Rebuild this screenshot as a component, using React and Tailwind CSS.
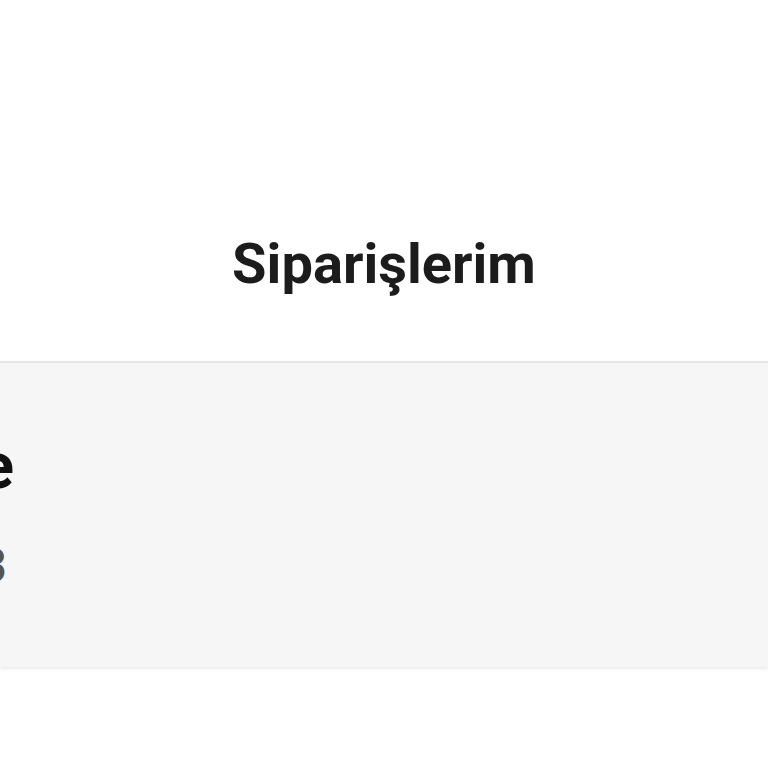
export default function App() {
  return (
    <div className="w-[768px] h-[768px] overflow-hidden bg-white font-['Roboto',sans-serif]">
      {/* Header */}
      <header className="h-[363px] flex items-end justify-center pb-[69px] border-b-2 border-[#e6e6e6]">
        <h1 className="text-[56px] leading-none font-bold text-[#1c1c1c]">Siparişlerim</h1>
      </header>

      {/* Order card, scrolled off to the left */}
      <section className="h-[304px] bg-[#f6f6f6] shadow-[0_2px_3px_rgba(0,0,0,0.08)]">
        <div className="w-[14px] flex flex-col items-end pt-[72px]">
          <p className="whitespace-nowrap text-[64px] leading-none font-bold text-[#111]">Sipariş Detaylarını Görüntüle</p>
          <p className="whitespace-nowrap text-[48px] leading-none font-medium text-[#555] mt-[43px] mr-[7px]">12.03.2023</p>
        </div>
      </section>
    </div>
  )
}
